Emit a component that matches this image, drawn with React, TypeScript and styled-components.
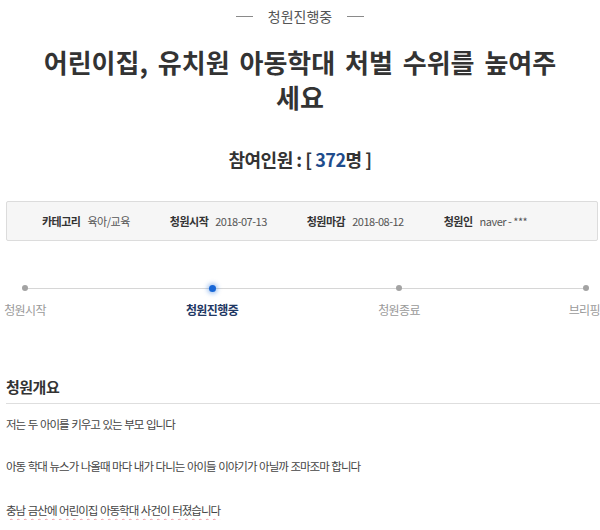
import React from "react";
import styled, { createGlobalStyle } from "styled-components";

const Global = createGlobalStyle`
  html, body { margin: 0; padding: 0; background: #fff; }
  body {
    font-family: "Noto Sans CJK KR", "Noto Sans", sans-serif;
    color: #333;
    overflow: hidden;
  }
  * { box-sizing: border-box; }
`;

const Page = styled.div`
  width: 600px;
`;

const Header = styled.header`
  display: flex;
  flex-direction: column;
  align-items: center;
  padding-top: 6px;
`;

const Status = styled.div`
  display: flex;
  align-items: center;
  gap: 15px;
  font-size: 14px;
  line-height: 20px;
  color: #555;
  &::before,
  &::after {
    content: "";
    width: 17px;
    height: 1px;
    background: #8a8a8a;
  }
`;

const Title = styled.h1`
  margin: 18px 0 0;
  max-width: 530px;
  text-align: center;
  font-size: 26px;
  font-weight: 700;
  line-height: 35px;
  word-spacing: 4px;
  color: #333;
`;

const Count = styled.div`
  margin-top: 33px;
  font-size: 18px;
  font-weight: 700;
  line-height: 24px;
  letter-spacing: -0.5px;
  color: #333;
`;

const Num = styled.span`
  color: #1f4c8c;
`;

const Body = styled.main`
  padding-left: 6px;
`;

const InfoBox = styled.dl`
  display: flex;
  align-items: center;
  gap: 40px;
  height: 40px;
  margin: 30px 2px 0 0;
  padding-left: 35px;
  background: #f6f6f6;
  border: 1px solid #dcdcdc;
  border-radius: 2px;
`;

const InfoItem = styled.div`
  display: flex;
  align-items: center;
  gap: 7px;
  font-size: 11px;
  line-height: 16px;
`;

const InfoLabel = styled.dt`
  font-weight: 700;
  letter-spacing: -0.5px;
  color: #333;
`;

const InfoValue = styled.dd`
  margin: 0;
  letter-spacing: -0.5px;
  color: #555;
`;

const Track = styled.ol`
  position: relative;
  display: flex;
  justify-content: space-between;
  list-style: none;
  margin: 43px 0 0;
  padding: 0 0 0 5px;
  &::before {
    content: "";
    position: absolute;
    left: 19px;
    right: 14px;
    top: 4px;
    height: 1px;
    background: #d6d6d6;
  }
`;

const Step = styled.li`
  position: relative;
  width: 28px;
  display: flex;
  flex-direction: column;
  align-items: center;
`;

const DotWrap = styled.div`
  height: 8px;
  display: flex;
  align-items: center;
  justify-content: center;
`;

const Dot = styled.span<{ $active?: boolean }>`
  display: block;
  width: ${(p) => (p.$active ? "7px" : "6px")};
  height: ${(p) => (p.$active ? "7px" : "6px")};
  border-radius: 50%;
  background: ${(p) => (p.$active ? "#1766d6" : "#a3a3a3")};
  box-shadow: ${(p) => (p.$active ? "0 0 4px 2px rgba(23, 102, 214, 0.35)" : "none")};
`;

const StepLabel = styled.span<{ $active?: boolean; $end?: boolean }>`
  margin-top: 10px;
  align-self: ${(p) => (p.$end ? "flex-end" : "center")};
  white-space: nowrap;
  font-size: 12px;
  line-height: 16px;
  letter-spacing: -0.6px;
  font-weight: ${(p) => (p.$active ? 700 : 400)};
  color: ${(p) => (p.$active ? "#1f3864" : "#9a9a9a")};
`;

const SectionTitle = styled.h2`
  margin: 59px 0 0;
  padding-bottom: 6px;
  border-bottom: 1px solid #dedede;
  font-size: 15px;
  font-weight: 700;
  line-height: 20px;
  letter-spacing: -0.5px;
  color: #333;
`;

const Para = styled.p<{ $gap?: number }>`
  margin: ${(p) => p.$gap ?? 22}px 0 0;
  font-size: 11.5px;
  line-height: 20px;
  letter-spacing: -1px;
  word-spacing: 1px;
  color: #444;
`;

const Flagged = styled.span`
  text-decoration-line: underline;
  text-decoration-style: wavy;
  text-decoration-color: #ee98a1;
  text-decoration-thickness: 1px;
  text-underline-offset: 3px;
  text-decoration-skip-ink: none;
`;

const info = [
  { label: "카테고리", value: "육아/교육" },
  { label: "청원시작", value: "2018-07-13" },
  { label: "청원마감", value: "2018-08-12" },
  { label: "청원인", value: "naver - ***" },
];

const steps = ["청원시작", "청원진행중", "청원종료", "브리핑"];

export default function App() {
  return (
    <Page>
      <Global />
      <Header>
        <Status>청원진행중</Status>
        <Title>어린이집, 유치원 아동학대 처벌 수위를 높여주세요</Title>
        <Count>
          참여인원 : [ <Num>372</Num>명 ]
        </Count>
      </Header>
      <Body>
        <InfoBox>
          {info.map((i) => (
            <InfoItem key={i.label}>
              <InfoLabel>{i.label}</InfoLabel>
              <InfoValue>{i.value}</InfoValue>
            </InfoItem>
          ))}
        </InfoBox>
        <Track>
          {steps.map((s, idx) => (
            <Step key={s}>
              <DotWrap>
                <Dot $active={idx === 1} />
              </DotWrap>
              <StepLabel $active={idx === 1} $end={idx === steps.length - 1}>
                {s}
              </StepLabel>
            </Step>
          ))}
        </Track>
        <section>
          <SectionTitle>청원개요</SectionTitle>
          <Para $gap={10}>저는 두 아이를 키우고 있는 부모 입니다</Para>
          <Para>아동 학대 뉴스가 나올때 마다 내가 다니는 아이들 이야기가 아닐까 조마조마 합니다</Para>
          <Para $gap={24}>
            <Flagged>충남 금산에 어린이집 아동학대 사건이 터졌습니다</Flagged>
          </Para>
        </section>
      </Body>
    </Page>
  );
}
